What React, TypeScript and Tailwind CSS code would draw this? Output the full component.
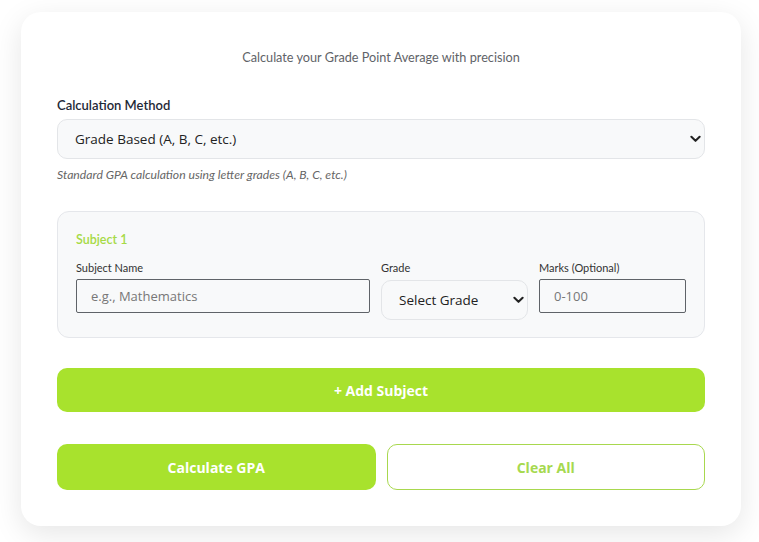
import React from "react";

const Chevron = ({ className = "" }: { className?: string }) => (
  <svg viewBox="0 0 12 8" className={className} fill="none">
    <path d="M1.5 1.5 6 6l4.5-4.5" stroke="#222" strokeWidth="2.2" strokeLinecap="round" strokeLinejoin="round" />
  </svg>
);

export default function App() {
  const body = "font-['Lato','Liberation_Sans',sans-serif]";
  const pop = "font-['Open_Sans','Liberation_Sans',sans-serif]";
  return (
    <div className="min-h-[542px] bg-white pt-[12px] pl-[21px]">
      <div className={`w-[720px] rounded-[20px] bg-white p-[36px] shadow-[0_8px_30px_rgba(0,0,0,0.1)] ${body}`}>
        <p className="text-center text-[12.7px] leading-[18px] text-[#5f6368]">
          Calculate your Grade Point Average with precision
        </p>

        <div className="mt-[31px]">
          <label className="block text-[13px] font-semibold leading-[16px] text-[#1f2937]">Calculation Method</label>
          <div className="relative mt-[6px]">
            <select
              className={`h-[40px] w-full appearance-none rounded-[10px] border border-[#e3e5e8] bg-[#f8f9fa] px-[17px] text-[13.5px] text-[#222] outline-none ${pop}`}
              defaultValue="grade"
            >
              <option value="grade">Grade Based (A, B, C, etc.)</option>
            </select>
            <Chevron className="pointer-events-none absolute right-[4px] top-[16px] h-[8px] w-[11px]" />
          </div>
          <p className="mt-[8px] text-[12.2px] italic leading-[16px] text-[#666]">
            Standard GPA calculation using letter grades (A, B, C, etc.)
          </p>
        </div>

        <div className="mt-[28px] rounded-[12px] border border-[#e5e7eb] bg-[#f8f9fa] px-[18px] pb-[17px] pt-[18px]">
          <h3 className="text-[12.5px] font-semibold leading-[20px] text-[#a6da45]">Subject 1</h3>
          <div className="mt-[11px] grid grid-cols-[2fr_1fr_1fr] items-start gap-x-[11px]">
            <div>
              <label className="block text-[11px] leading-[14px] text-[#333]">Subject Name</label>
              <input
                placeholder="e.g., Mathematics"
                className={`mt-[4px] h-[34px] w-full rounded-[2px] border border-[#5f6368] bg-transparent px-[14px] text-[13px] outline-none placeholder:text-[#777] ${pop}`}
              />
            </div>
            <div>
              <label className="block text-[11px] leading-[14px] text-[#333]">Grade</label>
              <div className="relative mt-[5px]">
                <select
                  className={`h-[40px] w-full appearance-none rounded-[10px] border border-[#e3e5e8] bg-[#f8f9fa] px-[17px] text-[13.5px] text-[#222] outline-none ${pop}`}
                  defaultValue=""
                >
                  <option value="">Select Grade</option>
                </select>
                <Chevron className="pointer-events-none absolute right-[4px] top-[16px] h-[8px] w-[11px]" />
              </div>
            </div>
            <div>
              <label className="block text-[11px] leading-[14px] text-[#333]">Marks (Optional)</label>
              <input
                placeholder="0-100"
                className={`mt-[4px] h-[34px] w-full rounded-[2px] border border-[#5f6368] bg-transparent px-[14px] text-[13px] outline-none placeholder:text-[#777] ${pop}`}
              />
            </div>
          </div>
        </div>

        <button className={`mt-[30px] h-[44px] w-full rounded-[10px] bg-[#a8e22d] text-[14px] font-bold text-white ${pop}`}>
          + Add Subject
        </button>

        <div className="mt-[32px] grid grid-cols-2 gap-[11px]">
          <button className={`h-[46px] rounded-[10px] bg-[#a8e22d] text-[14px] font-bold text-white ${pop}`}>
            Calculate GPA
          </button>
          <button className={`h-[46px] rounded-[10px] border border-[#a8d84e] bg-white text-[14px] font-bold text-[#a6d94f] ${pop}`}>
            Clear All
          </button>
        </div>
      </div>
    </div>
  );
}
